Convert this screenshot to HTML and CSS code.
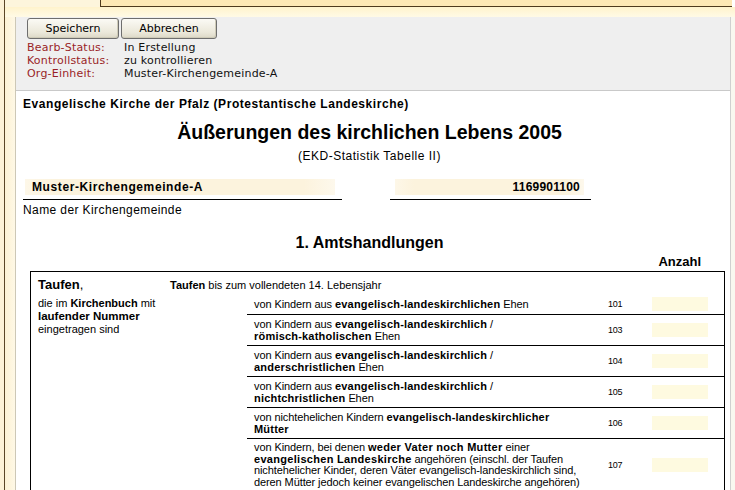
FILE: index.html
```html
<!DOCTYPE html>
<html lang="de">
<head>
<meta charset="utf-8">
<title>Äußerungen des kirchlichen Lebens 2005</title>
<link rel="stylesheet" href="styles.css">
</head>
<body>
<div class="shell">
  <div class="rail"></div>
  <div class="main">
    <div class="tabs"><div class="tab"></div><div class="tabbar"></div></div>
    <div class="band"></div>
    <div class="body">
      <div class="strip"></div>
      <div class="content">
        <div class="toolbar">
          <div class="buttons">
            <button class="btn btn-save">Speichern</button>
            <button class="btn btn-cancel">Abbrechen</button>
          </div>
          <div class="status">
            <div class="srow"><span class="slabel">Bearb-Status:</span><span class="sval">In Erstellung</span></div>
            <div class="srow"><span class="slabel">Kontrollstatus:</span><span class="sval">zu kontrollieren</span></div>
            <div class="srow"><span class="slabel">Org-Einheit:</span><span class="sval">Muster-Kirchengemeinde-A</span></div>
          </div>
        </div>
        <div class="form">
          <div class="org">Evangelische Kirche der Pfalz (Protestantische Landeskirche)</div>
          <div class="title">Äußerungen des kirchlichen Lebens 2005</div>
          <div class="subtitle">(EKD-Statistik Tabelle II)</div>
          <div class="idrow">
            <div class="idblock idname">
              <div class="field field-name">Muster-Kirchengemeinde-A</div>
            </div>
            <div class="idblock idnum">
              <div class="field field-num">1169901100</div>
            </div>
          </div>
          <div class="idlabel">Name der Kirchengemeinde</div>
          <div class="section">1. Amtshandlungen</div>
          <div class="anzahl">Anzahl</div>
          <div class="tbl">
            <div class="thead">
              <div class="th-left"><b class="big">Taufen</b><span class="bigr">,</span></div>
              <div class="th-right"><b>Taufen</b> bis zum vollendeten 14. Lebensjahr</div>
            </div>
            <div class="tbody">
              <div class="tb-left">die im <b>Kirchenbuch</b> mit<br><b class="mid">laufender Nummer</b><br>eingetragen sind</div>
              <div class="tb-right">
                <div class="row row-first">
                  <div class="rtext">von Kindern aus <b>evangelisch-landeskirchlichen</b> Ehen</div>
                  <div class="code">101</div>
                  <div class="inp"></div>
                </div>
                <div class="row">
                  <div class="rtext">von Kindern aus <b>evangelisch-landeskirchlich</b> /<br><b>römisch-katholischen</b> Ehen</div>
                  <div class="code">103</div>
                  <div class="inp"></div>
                </div>
                <div class="row">
                  <div class="rtext">von Kindern aus <b>evangelisch-landeskirchlich</b> /<br><b>anderschristlichen</b> Ehen</div>
                  <div class="code">104</div>
                  <div class="inp"></div>
                </div>
                <div class="row">
                  <div class="rtext">von Kindern aus <b>evangelisch-landeskirchlich</b> /<br><b>nichtchristlichen</b> Ehen</div>
                  <div class="code">105</div>
                  <div class="inp"></div>
                </div>
                <div class="row">
                  <div class="rtext">von nichtehelichen Kindern <b>evangelisch-landeskirchlicher</b><br><b>Mütter</b></div>
                  <div class="code">106</div>
                  <div class="inp"></div>
                </div>
                <div class="row">
                  <div class="rtext rtext-long">von Kindern, bei denen <b class="strong">weder Vater noch Mutter</b> einer<br><b class="strong">evangelischen Landeskirche</b> angehören (einschl. der Taufen<br>nichtehelicher Kinder, deren Väter evangelisch-landeskirchlich sind,<br>deren Mütter jedoch keiner evangelischen Landeskirche angehören)</div>
                  <div class="code">107</div>
                  <div class="inp"></div>
                </div>
                <div class="row row-more">
                  <div class="rtext"></div>
                  <div class="code"></div>
                  <div class="inp"></div>
                </div>
              </div>
            </div>
          </div>
        </div>
      </div>
      <div class="rstrip"></div>
    </div>
  </div>
</div>
</body>
</html>
```

FILE: styles.css
```css
html, body {
  margin: 0;
  padding: 0;
  overflow: hidden;
  background: #ffffff;
}
body {
  font-family: "Liberation Sans", Arial, sans-serif;
  font-size: 11px;
  color: #000;
}
.shell {
  display: flex;
  min-height: 100vh;
}
.rail {
  width: 4px;
  background: #fdf2d6;
}
.main {
  flex: 1;
  display: flex;
  flex-direction: column;
  border-left: 1px solid #5a4526;
}
.tabs {
  display: flex;
  height: 7px;
}
.tab {
  width: 95px;
  background: #fdf5dc;
  border-right: 1px solid #4e3a1c;
}
.tabbar {
  flex: 1;
  background: #fde8b4;
  border-bottom: 1px solid #4e3a1c;
  height: 6px;
  margin-right: 3px;
}
.band {
  height: 10px;
  background: linear-gradient(#fff3cc, #fffae6);
}
.body {
  flex: 1;
  display: flex;
}
.strip {
  width: 10px;
  background: linear-gradient(90deg, #fdf2d4, #fef8e6);
}
.content {
  width: 714px;
  border-left: 1px solid #cdc8b6;
  border-right: 1px solid #d0d0d0;
  background: #fff;
}
.rstrip {
  width: 4px;
  background: #f9f8f0;
}
.toolbar {
  background: #efefef;
  border-bottom: 1px solid #c9c9c9;
  padding: 1px 0 10px 11px;
  height: 62px;
}
.buttons {
  display: flex;
  gap: 2px;
}
.btn {
  font-family: "DejaVu Sans", Verdana, sans-serif;
  font-size: 11px;
  height: 21px;
  padding: 0;
  margin: 0;
  border: 1px solid #6e6e6e;
  border-radius: 3px;
  background: linear-gradient(#fbfaf5, #ebe8da 70%, #dcd8c6);
  color: #000;
  box-shadow: inset -1px -1px 0 #cfcbb8;
}
.btn-save { width: 92px; }
.btn-cancel { width: 96px; }
.status {
  margin-top: 2px;
  font-family: "DejaVu Sans", Verdana, sans-serif;
  font-size: 11px;
  line-height: 13px;
  letter-spacing: 0.2px;
}
.srow {
  display: flex;
}
.slabel {
  width: 97px;
  color: #9a1f28;
}
.sval {
  color: #111;
}
.form {
  padding: 0 14px 0 7px;
}
.org {
  margin-top: 6px;
  font-size: 12px;
  line-height: 14px;
  font-weight: bold;
  letter-spacing: 0.55px;
}
.title {
  margin-top: 9px;
  font-size: 19.5px;
  line-height: 24px;
  font-weight: bold;
  text-align: center;
}
.subtitle {
  margin-top: 5px;
  font-size: 12px;
  line-height: 14px;
  text-align: center;
  letter-spacing: 0.5px;
}
.idrow {
  display: flex;
  margin-top: 16px;
}
.idblock {
  border-bottom: 1px solid #000;
  padding-bottom: 4px;
}
.idname {
  width: 319px;
}
.idnum {
  width: 201px;
  margin-left: 48px;
}
.field {
  height: 16px;
  line-height: 16px;
  font-size: 12px;
  font-weight: bold;
  background: linear-gradient(90deg, #fdf7e8, #fcf3dd 10%, #fcf3dd 90%, #fdf8ec);
}
.field-name {
  margin-left: 2px;
  width: 310px;
  padding-left: 7px;
  box-sizing: border-box;
  letter-spacing: 0.6px;
}
.field-num {
  margin-left: 5px;
  width: 189px;
  padding-right: 4px;
  box-sizing: border-box;
  text-align: right;
  letter-spacing: 0.2px;
}
.idlabel {
  margin-top: 3px;
  font-size: 12px;
  line-height: 14px;
  letter-spacing: 0.4px;
}
.section {
  margin-top: 16px;
  font-size: 16px;
  line-height: 19px;
  font-weight: bold;
  text-align: center;
}
.anzahl {
  margin-top: 2px;
  margin-right: 15px;
  font-size: 13px;
  line-height: 15px;
  font-weight: bold;
  text-align: right;
}
.tbl {
  margin-top: 2px;
  margin-left: 7px;
  width: 695px;
  box-sizing: border-box;
  border: 1px solid #000;
}
.thead {
  display: flex;
  padding-top: 5px;
  line-height: 16px;
}
.th-left {
  width: 139px;
  padding-left: 7px;
  box-sizing: border-box;
}
.big {
  font-size: 13px;
}
.bigr {
  font-size: 13px;
}
.th-right {
  font-size: 11px;
}
.tbody {
  display: flex;
}
.tb-left {
  width: 216px;
  padding: 4px 0 0 7px;
  box-sizing: border-box;
  line-height: 13px;
}
.mid {
  font-size: 11.5px;
}
.tb-right {
  flex: 1;
}
.row {
  display: flex;
  align-items: center;
  border-bottom: 1px solid #000;
  padding: 3px 0;
}
.row-first {
  padding: 4px 0 3px;
}
.row-more {
  height: 24px;
}
.rtext {
  width: 361px;
  padding-left: 7px;
  box-sizing: border-box;
  line-height: 12px;
  letter-spacing: -0.1px;
}
.rtext-long {
  line-height: 11.6px;
}
.rtext b {
  letter-spacing: 0.2px;
}
.rtext .strong {
  letter-spacing: 0.3px;
}
.code {
  width: 44px;
  font-size: 9px;
  letter-spacing: -0.2px;
}
.inp {
  width: 56px;
  height: 14px;
  background: #fefae0;
}
```
